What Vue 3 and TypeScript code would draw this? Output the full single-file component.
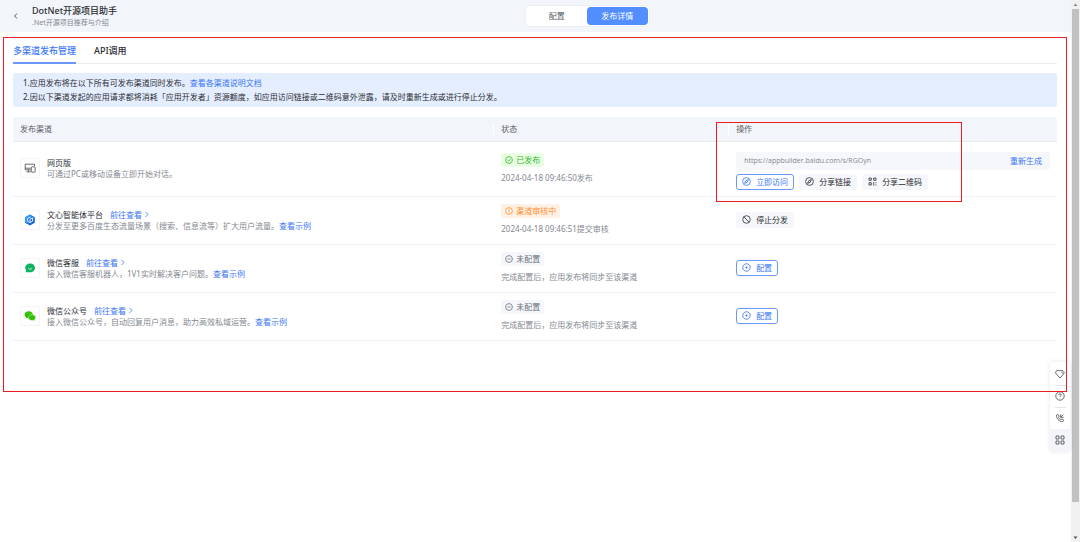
<script setup lang="ts">
import { ref } from 'vue'

type IconName = 'compass' | 'qr' | 'stop' | 'config'
type Status = 'done' | 'review' | 'none'

interface Action {
  label: string
  icon: IconName
  primary: boolean
}

interface Channel {
  id: string
  name: string
  desc: string
  visit: boolean
  example: boolean
  status: Status
  statusText: string
  note: string
  url?: string
  actions: Action[]
}

const mode = ref<'config' | 'detail'>('detail')
const tab = ref<'channels' | 'api'>('channels')

const channels: Channel[] = [
  {
    id: 'web',
    name: '网页版',
    desc: '可通过PC或移动设备立即开始对话。',
    visit: false,
    example: false,
    status: 'done',
    statusText: '已发布',
    note: '2024-04-18 09:46:50发布',
    url: 'https://appbuilder.baidu.com/s/RGOyn',
    actions: [
      { label: '立即访问', icon: 'compass', primary: true },
      { label: '分享链接', icon: 'compass', primary: false },
      { label: '分享二维码', icon: 'qr', primary: false },
    ],
  },
  {
    id: 'agent',
    name: '文心智能体平台',
    desc: '分发至更多百度生态流量场景（搜索、信息流等）扩大用户流量。',
    visit: true,
    example: true,
    status: 'review',
    statusText: '渠道审核中',
    note: '2024-04-18 09:46:51提交审核',
    actions: [{ label: '停止分发', icon: 'stop', primary: false }],
  },
  {
    id: 'service',
    name: '微信客服',
    desc: '接入微信客服机器人，1V1实时解决客户问题。',
    visit: true,
    example: true,
    status: 'none',
    statusText: '未配置',
    note: '完成配置后，应用发布将同步至该渠道',
    actions: [{ label: '配置', icon: 'config', primary: true }],
  },
  {
    id: 'official',
    name: '微信公众号',
    desc: '接入微信公众号，自动回复用户消息，助力高效私域运营。',
    visit: true,
    example: true,
    status: 'none',
    statusText: '未配置',
    note: '完成配置后，应用发布将同步至该渠道',
    actions: [{ label: '配置', icon: 'config', primary: true }],
  },
]
</script>

<template>
  <div class="page">
    <div class="app">
      <header class="top">
        <div class="identity">
          <button class="back" aria-label="返回">
            <svg viewBox="0 0 8 8" width="8" height="8" class="line"><path d="M5 1.5 2.6 4 5 6.5" /></svg>
          </button>
          <div>
            <h1>DotNet开源项目助手</h1>
            <p>.Net开源项目推荐与介绍</p>
          </div>
        </div>
        <nav class="switch">
          <button :class="{ on: mode === 'config' }" @click="mode = 'config'">配置</button>
          <button :class="{ on: mode === 'detail' }" @click="mode = 'detail'">发布详情</button>
        </nav>
      </header>

      <main class="panel">
        <div class="tabs">
          <button :class="{ on: tab === 'channels' }" @click="tab = 'channels'">多渠道发布管理</button>
          <button :class="{ on: tab === 'api' }" @click="tab = 'api'">API调用</button>
        </div>

        <div class="notice">
          <p>1.应用发布将在以下所有可发布渠道同时发布。<a href="#">查看各渠道说明文档</a></p>
          <p>2.因以下渠道发起的应用请求都将消耗「应用开发者」资源额度，如应用访问链接或二维码意外泄露，请及时重新生成或进行停止分发。</p>
        </div>

        <table>
          <colgroup>
            <col class="c1" />
            <col class="c2" />
            <col class="c3" />
          </colgroup>
          <thead>
            <tr>
              <th scope="col"><span>发布渠道</span></th>
              <th scope="col"><span>状态</span></th>
              <th scope="col"><span>操作</span></th>
            </tr>
          </thead>
          <tbody>
            <tr v-for="c in channels" :key="c.id" :class="{ tall: c.url }">
              <td>
                <div class="channel">
                  <span class="logo">
                    <svg v-if="c.id === 'web'" viewBox="0 0 12 12" width="12" height="12" class="line">
                      <path d="M10.5 4V2.2H1.2v5.6h5.6M1.2 6.2h5.6M2.5 9.8h4.3M4.5 7.8v2" stroke="#44464d" />
                      <rect x="7.3" y="4.8" width="3.8" height="5.4" rx=".7" stroke="#44464d" />
                    </svg>
                    <svg v-else-if="c.id === 'agent'" viewBox="0 0 12 12" width="12" height="12">
                      <path d="M6 .5 10.8 3.2v5.6L6 11.5 1.2 8.8V3.2Z" fill="#1668dc" />
                      <path d="M6 .5 1.2 3.2v5.6L3.4 10V5L8 2Z" fill="#2d9bf5" />
                      <path d="M6 5.2 8.6 3.7v3.4L6 8.6 3.6 7.3V4.6L6.6 3" fill="none" stroke="#fff" stroke-width=".9" />
                      <path d="M6 5.2v3.2" fill="none" stroke="#fff" stroke-width=".9" />
                    </svg>
                    <svg v-else-if="c.id === 'service'" viewBox="0 0 12 12" width="12" height="12">
                      <path d="M6.2 1.4c2.8 0 4.8 1.9 4.8 4.3S9 10.2 6.2 10.2H1.5l.8-1.5C1.6 8 1.2 6.9 1.2 5.8c0-2.5 2.2-4.4 5-4.4Z" fill="#12b35f" />
                      <path d="M4.6 6.5c.8 1.1 2.4 1.1 3.2 0" fill="none" stroke="#fff" stroke-width=".8" stroke-linecap="round" />
                    </svg>
                    <svg v-else viewBox="0 0 12 12" width="12" height="12">
                      <path d="M4.7 1.2C2.4 1.2.6 2.7.6 4.6c0 1.1.6 2 1.5 2.6l-.4 1.3 1.5-.7c.5.1 1 .2 1.5.2 2.3 0 4.1-1.5 4.1-3.4S7 1.2 4.7 1.2Z" fill="#2dc100" />
                      <path d="M8 4.6c2 0 3.6 1.3 3.6 3 0 .9-.5 1.7-1.2 2.2l.3 1.2-1.4-.7c-.4.1-.8.2-1.3.2-2 0-3.6-1.3-3.6-2.9S6 4.6 8 4.6Z" fill="#2dc100" stroke="#fff" stroke-width=".4" />
                      <g fill="#fff">
                        <circle cx="3.4" cy="3.6" r=".4" /><circle cx="6" cy="3.6" r=".4" />
                        <circle cx="6.9" cy="6.8" r=".3" /><circle cx="9.2" cy="6.8" r=".3" />
                      </g>
                    </svg>
                  </span>
                  <div>
                    <p class="name">
                      {{ c.name }}
                      <a v-if="c.visit" href="#">前往查看
                        <svg viewBox="0 0 8 8" width="8" height="8" class="line"><path d="M2.5 2 5 4.5 2.5 7" /></svg>
                      </a>
                    </p>
                    <p class="desc">{{ c.desc }}<a v-if="c.example" href="#">查看示例</a></p>
                  </div>
                </div>
              </td>
              <td>
                <span class="tag" :class="c.status">
                  <svg viewBox="0 0 8 8" width="8" height="8" class="line">
                    <circle cx="4" cy="4" r="3.4" />
                    <path v-if="c.status === 'done'" d="m2.4 4 1.2 1.2 2-2.2" />
                    <path v-else-if="c.status === 'review'" d="M4 2.1v2.3M4 5.3v.5" />
                    <path v-else d="M2.4 4h3.2" />
                  </svg>
                  {{ c.statusText }}
                </span>
                <p class="note">{{ c.note }}</p>
              </td>
              <td>
                <div class="ops">
                  <div v-if="c.url" class="link">
                    <input type="text" readonly :value="c.url" aria-label="访问链接" />
                    <button>重新生成</button>
                  </div>
                  <div class="buttons">
                    <button v-for="a in c.actions" :key="a.label" class="btn" :class="{ primary: a.primary }">
                      <svg viewBox="0 0 9 9" width="9" height="9" class="line">
                        <template v-if="a.icon === 'compass'">
                          <circle cx="4.5" cy="4.5" r="3.9" />
                          <path d="M6.4 2.6 5.3 5.3 2.6 6.4 3.7 3.7Z" />
                        </template>
                        <template v-else-if="a.icon === 'qr'">
                          <path d="M1 1h2.3v2.3H1ZM5.7 1H8v2.3H5.7ZM1 5.7h2.3V8H1ZM5.7 5.2v3.4M8 5.2v1M8 7.4v1.2" />
                        </template>
                        <template v-else-if="a.icon === 'stop'">
                          <circle cx="4.5" cy="4.5" r="3.8" />
                          <path d="m1.8 1.8 5.4 5.4" />
                        </template>
                        <template v-else>
                          <path d="M3 .9h3L8.1 3v3L6 8.1H3L.9 6V3Z" />
                          <circle cx="4.5" cy="4.5" r="1" fill="currentColor" stroke="none" />
                        </template>
                      </svg>
                      {{ a.label }}
                    </button>
                  </div>
                </div>
              </td>
            </tr>
          </tbody>
        </table>
      </main>

      <aside class="tools">
        <button aria-label="收藏">
          <svg viewBox="0 0 10 10" width="10" height="10" class="line">
            <path d="M5 9 1.2 5C.2 3.8.6 2.2 1.8 1.7 2.6 1.3 3.6 1.6 4.2 1.6h2.6C8.6 1.4 9.8 3.4 8.6 5Z" />
            <path d="M6.2 3.2c.9-.2 1.4.4 1.3 1.2" />
          </svg>
        </button>
        <button aria-label="帮助">
          <svg viewBox="0 0 10 10" width="10" height="10" class="line">
            <circle cx="5" cy="5" r="4.2" />
            <path d="M3.7 4c0-1.7 2.6-1.6 2.6 0 0 .9-1.3.9-1.3 1.9M5 7v.4" />
          </svg>
        </button>
        <button aria-label="电话">
          <svg viewBox="0 0 10 10" width="10" height="10" class="line">
            <path d="M2.8 1.3 1.5 2.2C1.2 5.6 4.4 8.8 7.8 8.6l1-1.4L7 5.9l-1.1.8C4.8 6.2 3.9 5.3 3.4 4.2l.8-1ZM5.6 1.5v2.8h3M5.8 4 8.3 1.6" />
          </svg>
        </button>
        <button class="on" aria-label="更多">
          <svg viewBox="0 0 10 10" width="10" height="10" class="line">
            <path d="M1 1h3v3H1ZM6 1h3v3H6ZM1 6h3v3H1ZM6 6h3v3H6Z" />
          </svg>
        </button>
      </aside>
    </div>

    <div class="scroll" aria-hidden="true">
      <svg viewBox="0 0 9 9" width="9" height="9"><path d="M4.5 3.5 6.5 6h-4Z" fill="#8a8a8a" /></svg>
      <div class="rail"><div class="thumb"></div></div>
      <svg viewBox="0 0 9 9" width="9" height="9"><path d="M2.5 3.5h4L4.5 6Z" fill="#505050" /></svg>
    </div>

    <div class="mark area"></div>
    <div class="mark focus"></div>
  </div>
</template>

<style>
body {
  margin: 0;
  background: #f2f5f9;
}
</style>

<style scoped>
.page {
  position: relative;
  display: flex;
  min-height: 100vh;
  font-family: "Noto Sans", "Noto Sans CJK SC", sans-serif;
  font-size: 8px;
  line-height: 12px;
  color: #2b2d33;
}

.page * {
  box-sizing: border-box;
}

h1,
p {
  margin: 0;
}

button,
input {
  margin: 0;
  padding: 0;
  border: 0;
  background: none;
  color: inherit;
  font: inherit;
}

button {
  cursor: pointer;
}

a {
  color: #3b76f6;
  text-decoration: none;
}

.line {
  flex: none;
  fill: none;
  stroke: currentColor;
  stroke-width: 0.8;
}

.app {
  flex: 1;
  display: flex;
  flex-direction: column;
  background: #f2f5f9;
}

.top {
  display: grid;
  grid-template-columns: 49% auto 1fr;
  align-items: center;
  height: 32px;
}

.identity {
  display: flex;
  align-items: center;
  gap: 12px;
  padding-left: 12px;
}

.back {
  display: flex;
}

h1 {
  font-size: 9px;
  font-weight: 500;
  line-height: 13px;
}

.identity p {
  font-size: 7px;
  line-height: 11px;
  color: #848891;
}

.switch {
  display: flex;
  justify-self: start;
  padding: 1px;
  border: 1px solid #eceff4;
  border-radius: 4px;
  background: #fff;
}

.switch button {
  width: 60px;
  height: 18px;
  border-radius: 4px;
  color: #5c6069;
}

.switch .on {
  width: 61px;
  background: #528eff;
  color: #fff;
}

.panel {
  flex: 1;
  padding: 6px 14px 0 13px;
  border-radius: 4px 4px 0 0;
  background: #fff;
}

.tabs {
  display: flex;
  gap: 18px;
  height: 26px;
  border-bottom: 1px solid #ebedf1;
}

.tabs button {
  height: 26px;
  padding-top: 2px;
  border-bottom: 2px solid transparent;
  font-size: 9px;
  font-weight: 500;
}

.tabs .on {
  border-color: #6b97fa;
  color: #3b76f6;
}

.notice {
  margin: 9px 0 10px;
  padding: 3px 10px;
  border-radius: 3px;
  background: #e5eeff;
  line-height: 14px;
}

table {
  width: 100%;
  table-layout: fixed;
  border-collapse: separate;
  border-spacing: 0;
}

.c1 {
  width: 46%;
}

.c2 {
  width: 22.5%;
}

.c3 {
  width: 31.5%;
}

th {
  height: 25px;
  padding: 0;
  border-bottom: 1px solid #e8ebf0;
  background: #f2f5f9;
  color: #5c6069;
  font-weight: 400;
  text-align: left;
}

th:first-child {
  border-top-left-radius: 3px;
}

th:last-child {
  border-top-right-radius: 3px;
}

th span {
  display: block;
  padding-left: 7px;
}

th + th span {
  border-left: 1px solid #fff;
}

td {
  height: 48px;
  padding: 0 7px 2px 8px;
  border-bottom: 1px solid #eef0f3;
  vertical-align: middle;
}

td:first-child {
  padding-left: 7px;
}

.tall td {
  height: 55px;
}

.channel {
  display: flex;
  align-items: center;
  gap: 7px;
}

.logo {
  display: grid;
  place-items: center;
  width: 20px;
  height: 20px;
  border: 1px solid #f3f4f6;
  border-radius: 2px;
}

.name {
  display: flex;
  gap: 7px;
}

.name a {
  display: flex;
  align-items: center;
  gap: 1px;
}

.name,
.desc {
  line-height: 11px;
}

.desc,
.note {
  color: #848891;
}

.tag {
  display: inline-flex;
  align-items: center;
  gap: 3px;
  height: 14px;
  padding: 0 4px;
  border-radius: 2px;
  vertical-align: top;
}

.done {
  background: #e8ffe3;
  color: #39b52b;
}

.review {
  background: #fff1e4;
  color: #ff8f33;
}

.none {
  background: #f6f7fa;
  color: #6d717a;
}

.note {
  margin-top: 5px;
}

.ops {
  display: grid;
  gap: 4px;
}

.tall .ops {
  padding-top: 5px;
}

.link {
  display: flex;
  align-items: center;
  height: 18px;
  padding: 0 8px;
  border-radius: 3px;
  background: #f6f7fa;
}

.link input {
  flex: 1;
  min-width: 0;
  font-family: "Open Sans", "Noto Sans", sans-serif;
  font-size: 7px;
  color: #848891;
  outline: none;
}

.link button {
  color: #3b76f6;
}

.buttons {
  display: flex;
  gap: 5px;
}

.btn {
  display: flex;
  align-items: center;
  gap: 5px;
  height: 16px;
  padding: 0 5px;
  border: 1px solid #f6f7fa;
  border-radius: 3px;
  background: #f6f7fa;
}

.primary {
  border-color: #6b97fa;
  background: #fff;
  color: #3b76f6;
}

.tools {
  position: absolute;
  top: 362px;
  right: 10px;
  width: 20px;
  padding-top: 1px;
  border-radius: 3px;
  background: #fff;
  box-shadow: 0 0 5px rgba(30, 40, 70, 0.12);
  color: #44464d;
}

.tools button {
  display: grid;
  place-items: center;
  width: 100%;
  height: 22px;
}

.tools button + button {
  background: linear-gradient(#e3e5ea, #e3e5ea) center top / 11px 1px no-repeat;
}

.tools .on,
.tools button + .on {
  background: #f4f5fa;
}

.scroll {
  display: flex;
  flex-direction: column;
  width: 9px;
  background: #f1f1f1;
}

.rail {
  flex: 1;
  padding: 0 1px;
}

.thumb {
  height: 94%;
  background: #c1c1c1;
}

.mark {
  position: absolute;
  border: 1px solid #ed1c24;
  pointer-events: none;
}

.area {
  top: 37px;
  right: 13px;
  left: 3px;
  height: 355px;
}

.focus {
  top: 122px;
  right: 118px;
  left: 716px;
  height: 80px;
}
</style>
